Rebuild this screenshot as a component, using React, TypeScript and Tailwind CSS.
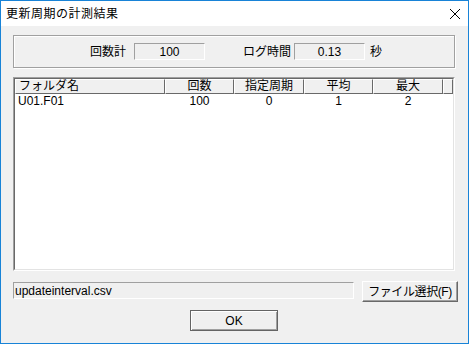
import React from 'react';

const font = { fontFamily: "'Liberation Sans','Noto Sans CJK JP',sans-serif" };

const columns = [
    { label: 'フォルダ名', width: 'w-[150px]', align: 'text-left pl-[3px]' },
    { label: '回数', width: 'w-[69px]', align: 'text-center' },
    { label: '指定周期', width: 'w-[70px]', align: 'text-center' },
    { label: '平均', width: 'w-[69px]', align: 'text-center' },
    { label: '最大', width: 'w-[70px]', align: 'text-center' },
];

const rows = [{ name: 'U01.F01', count: '100', period: '0', avg: '1', max: '2' }];

const Sunken = ({ className, children }: { className: string; children?: React.ReactNode }) => (
    <div className={`border-t border-l border-t-[#a0a0a0] border-l-[#a0a0a0] border-b border-r border-b-white border-r-white ${className}`}>
        {children}
    </div>
);

const HeaderCell = ({ label, width, align }: { label: string; width: string; align: string }) => (
    <div className={`${width} h-[15px] shrink-0 border-t border-l border-white border-r border-b border-r-[#696969] border-b-[#696969] leading-[13px] ${align}`}>
        {label}
    </div>
);

export default function App() {
    return (
        <div className="w-[469px] h-[344px] border border-[#1883d7] bg-[#f0f0f0] flex flex-col text-[12px] text-black" style={font}>
            {/* タイトルバー */}
            <div className="h-[25px] bg-white flex items-center justify-between pl-[5px] pr-[7px] shrink-0">
                <span className="text-[12px] tracking-[0.5px]">更新周期の計測結果</span>
                <svg width="12" height="12" viewBox="0 0 12 12">
                    <path d="M1 1 L11 11 M11 1 L1 11" stroke="#000" strokeWidth="1" />
                </svg>
            </div>

            <div className="flex flex-col pl-[12px]">
                {/* 集計 */}
                <div className="mt-[9px] w-[442px] h-[33px] border border-[#a0a0a0] shadow-[inset_1px_1px_0_#fff,1px_1px_0_#fff] flex items-center">
                    <span className="ml-[76px]">回数計</span>
                    <Sunken className="ml-[8px] w-[71px] h-[17px] flex items-center justify-center">100</Sunken>
                    <span className="ml-[38px]">ログ時間</span>
                    <Sunken className="ml-[3px] w-[71px] h-[17px] flex items-center justify-center">0.13</Sunken>
                    <span className="ml-[5px]">秒</span>
                </div>

                {/* 一覧 */}
                <div className="mt-[9px] w-[442px] h-[194px] border border-t-[#a0a0a0] border-l-[#a0a0a0] border-b-white border-r-white">
                    <div className="w-full h-full border border-t-[#696969] border-l-[#696969] border-b-[#e3e3e3] border-r-[#e3e3e3] bg-white flex flex-col overflow-hidden">
                        <div className="flex bg-[#f0f0f0] shrink-0">
                            {columns.map((c) => (
                                <HeaderCell key={c.label} {...c} />
                            ))}
                            <div className="flex-1 h-[15px] border-t border-l border-white border-r border-b border-r-[#696969] border-b-[#696969]" />
                        </div>
                        {rows.map((r) => (
                            <div key={r.name} className="flex h-[13px] leading-[14px]">
                                <div className="w-[150px] pl-[3px]">{r.name}</div>
                                <div className="w-[69px] text-center">{r.count}</div>
                                <div className="w-[70px] text-center">{r.period}</div>
                                <div className="w-[69px] text-center">{r.avg}</div>
                                <div className="w-[70px] text-center">{r.max}</div>
                            </div>
                        ))}
                    </div>
                </div>

                {/* ファイル */}
                <div className="mt-[10px] flex items-start">
                    <Sunken className="mt-[1px] w-[341px] h-[17px] flex items-center pl-[1px]">updateinterval.csv</Sunken>
                    <button className="ml-[8px] w-[96px] h-[21px] bg-[#f0f0f0] border border-t-white border-l-white border-b-[#696969] border-r-[#696969] shadow-[inset_-1px_-1px_0_#a0a0a0] flex items-center justify-center tracking-[-0.4px]">
                        ファイル選択(F)
                    </button>
                </div>

                <div className="mt-[8px] ml-[177px]">
                    <button className="w-[88px] h-[21px] bg-[#f0f0f0] border border-[#646464] shadow-[inset_1px_1px_0_#fff,inset_-1px_-1px_0_#a0a0a0] flex items-center justify-center">
                        OK
                    </button>
                </div>
            </div>
        </div>
    );
}
